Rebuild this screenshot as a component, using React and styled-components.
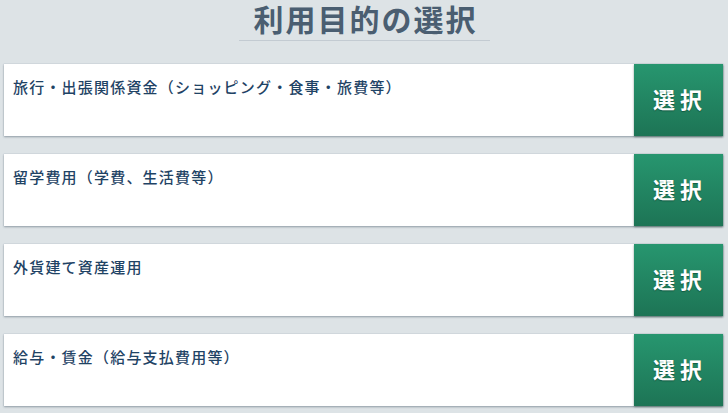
import React from "react";
import styled, { createGlobalStyle } from "styled-components";

const Global = createGlobalStyle`
  html, body { margin: 0; padding: 0; background: #dde3e6; }
  body { font-family: "Noto Sans CJK JP", "Noto Sans", sans-serif; }
`;

const Page = styled.div`
  width: 728px;
  height: 413px;
  overflow: hidden;
  display: flex;
  flex-direction: column;
  align-items: center;
  background: #dde3e6;
`;

const Title = styled.h1`
  margin: 0 0 23px 0;
  padding: 0 12px 4px 15px;
  white-space: nowrap;
  font-size: 30px;
  font-weight: 700;
  letter-spacing: 2px;
  line-height: 36px;
  color: #4a5e71;
  border-bottom: 1px solid #c3cbd2;
`;

const List = styled.div`
  align-self: stretch;
  display: flex;
  flex-direction: column;
  gap: 18px;
  padding: 0 5px 0 4px;
`;

const Card = styled.div`
  display: flex;
  height: 72px;
  background: #ffffff;
  box-shadow: 0 1px 2px rgba(60, 80, 95, 0.45), 0 0 1px rgba(60, 80, 95, 0.25);
`;

const Label = styled.div`
  flex: 1;
  padding: 13px 9px;
  font-size: 15px;
  font-weight: 500;
  letter-spacing: 1.2px;
  line-height: 20px;
  color: #1f4365;
`;

const SelectButton = styled.button`
  width: 89px;
  border: none;
  margin: 0;
  padding: 0 0 4px 3px;
  background: linear-gradient(#27966f, #1d7455);
  color: #ffffff;
  font-family: inherit;
  font-size: 22px;
  font-weight: 700;
  letter-spacing: 5px;
  text-shadow: 0 1px 1px rgba(0, 40, 25, 0.45);
  box-shadow: 0 1px 2px rgba(20, 60, 45, 0.5);
  cursor: pointer;
`;

const items = [
  "旅行・出張関係資金（ショッピング・食事・旅費等）",
  "留学費用（学費、生活費等）",
  "外貨建て資産運用",
  "給与・賃金（給与支払費用等）",
];

export default function App() {
  return (
    <Page>
      <Global />
      <Title>利用目的の選択</Title>
      <List>
        {items.map((t) => (
          <Card key={t}>
            <Label>{t}</Label>
            <SelectButton>選択</SelectButton>
          </Card>
        ))}
      </List>
    </Page>
  );
}
